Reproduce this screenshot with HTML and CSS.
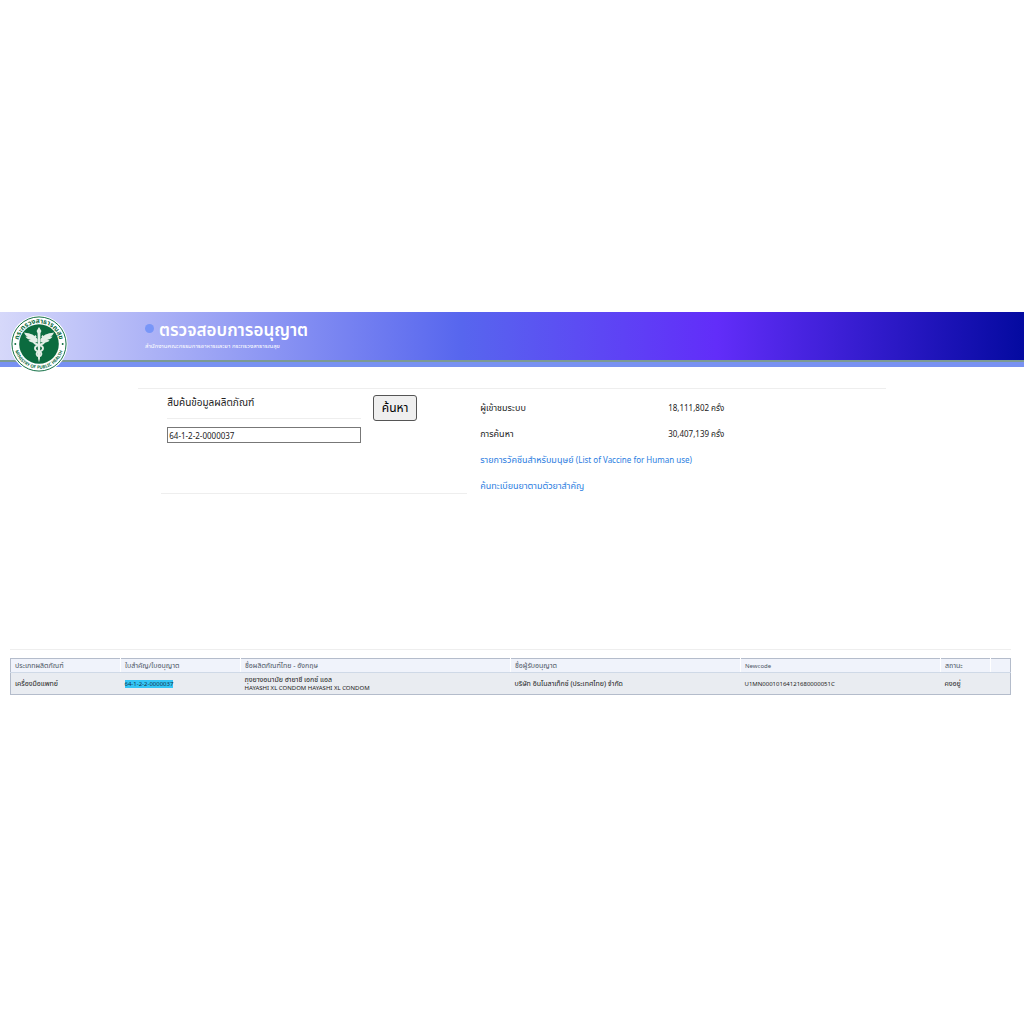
FILE: index.html
```html
<!DOCTYPE html>
<html lang="th">
<head>
    <meta charset="UTF-8">
    <meta name="viewport" content="width=device-width, initial-scale=1.0">
    <title>ตรวจสอบการอนุญาต</title>
    <link rel="stylesheet" href="styles.css">
</head>
<body>
    <div class="page">
        <header class="banner">
            <svg class="seal" viewBox="0 0 120 120" role="img" aria-label="Ministry of Public Health">
                <defs>
                    <path id="arcTop" d="M 17 60 A 43 43 0 0 1 103 60"/>
                    <path id="arcBottom" d="M 9 60 A 51 51 0 0 0 111 60"/>
                </defs>
                <circle cx="60" cy="60" r="59" fill="#fff"/>
                <circle cx="60" cy="60" r="56" fill="none" stroke="#0b6b3f" stroke-width="2"/>
                <circle cx="60" cy="60" r="41" fill="#0b6b3f"/>
                <text class="seal-thai"><textPath href="#arcTop" startOffset="50%">กระทรวงสาธารณสุข</textPath></text>
                <text class="seal-latin"><textPath href="#arcBottom" startOffset="50%">MINISTRY OF PUBLIC HEALTH</textPath></text>
                <circle cx="11" cy="60" r="2" fill="#0b6b3f"/>
                <circle cx="109" cy="60" r="2" fill="#0b6b3f"/>
                <g fill="#e3eee6">
                    <path d="M57 50 C51 41 44 38 29 36 C31 41 33 43 37 44 L32 45 C35 49 39 51 43 51 L38 53 C43 58 50 58 57 56 Z"/>
                    <path d="M63 50 C69 41 76 38 91 36 C89 41 87 43 83 44 L88 45 C85 49 81 51 77 51 L82 53 C77 58 70 58 63 56 Z"/>
                    <path d="M60 25 L65 33 L63 38 L62 90 L60 98 L58 90 L57 38 L55 33 Z"/>
                </g>
                <path d="M54 43 C43 51 48 60 60 62 C72 65 70 74 60 76 C53 78 54 84 60 86 M66 43 C77 51 72 60 60 62 C48 65 50 74 60 76 C67 78 66 84 60 86" fill="none" stroke="#e3eee6" stroke-width="4"/>
            </svg>
            <div class="banner-text">
                <h1>ตรวจสอบการอนุญาต</h1>
                <p>สำนักงานคณะกรรมการอาหารและยา กระทรวงสาธารณสุข</p>
            </div>
        </header>

        <main>
            <section class="panel">
                <form class="search" onsubmit="return false">
                    <div class="field">
                        <label for="keyword">สืบค้นข้อมูลผลิตภัณฑ์</label>
                        <input type="text" id="keyword" value="64-1-2-2-0000037">
                    </div>
                    <button type="submit">ค้นหา</button>
                </form>

                <div class="info">
                    <dl>
                        <dt>ผู้เข้าชมระบบ</dt>
                        <dd>18,111,802 ครั้ง</dd>
                        <dt>การค้นหา</dt>
                        <dd>30,407,139 ครั้ง</dd>
                    </dl>
                    <a href="#">รายการวัคซีนสำหรับมนุษย์ <span class="en">(List of Vaccine for Human use)</span></a>
                    <a href="#">ค้นทะเบียนยาตามตัวยาสำคัญ</a>
                </div>
            </section>

            <section class="results">
                <table>
                    <colgroup>
                        <col class="col-type">
                        <col class="col-license">
                        <col class="col-product">
                        <col class="col-holder">
                        <col class="col-code">
                        <col class="col-status">
                        <col>
                    </colgroup>
                    <thead>
                        <tr>
                            <th>ประเภทผลิตภัณฑ์</th>
                            <th>ใบสำคัญ/ใบอนุญาต</th>
                            <th>ชื่อผลิตภัณฑ์ไทย - อังกฤษ</th>
                            <th>ชื่อผู้รับอนุญาต</th>
                            <th class="code">Newcode</th>
                            <th>สถานะ</th>
                            <th></th>
                        </tr>
                    </thead>
                    <tbody>
                        <tr>
                            <td>เครื่องมือแพทย์</td>
                            <td class="code"><mark>64-1-2-2-0000037</mark></td>
                            <td>ถุงยางอนามัย ฮายาชี เอกซ์ แอล<br><span class="code">HAYASHI XL CONDOM HAYASHI XL CONDOM</span></td>
                            <td>บริษัท อินโนลาเท็กซ์ (ประเทศไทย) จำกัด</td>
                            <td class="code">U1MN00010164121680000051C</td>
                            <td>คงอยู่</td>
                            <td></td>
                        </tr>
                    </tbody>
                </table>
            </section>
        </main>
    </div>
</body>
</html>
```

FILE: styles.css
```css
* {
    box-sizing: border-box;
}

body {
    margin: 0;
    min-height: 100vh;
    display: flex;
    flex-direction: column;
    justify-content: center;
    background-color: #fff;
    color: #222;
    font-family: "Noto Sans", "Noto Sans Thai", sans-serif;
    font-size: 8px;
}

.page {
    padding-bottom: 17px;
}

.banner {
    position: relative;
    height: 55px;
    padding: 8px 0 0 145px;
    background: linear-gradient(to right, #d6d8fa 0%, #5766ee 45%, #622df9 70%, #040aa0 100%);
    border-bottom: 5px solid #7891f2;
    box-shadow: inset 0 -2px 0 #7c9a94;
    color: #fff;
}

.seal {
    position: absolute;
    left: 10px;
    top: 3px;
    width: 58px;
    height: 58px;
}

.seal-thai,
.seal-latin {
    fill: #0b6b3f;
    font-weight: bold;
    text-anchor: middle;
}

.seal-thai {
    font-size: 14px;
}

.seal-latin {
    font-size: 9px;
}

.banner h1 {
    display: flex;
    align-items: center;
    gap: 5px;
    margin: 0;
    font-size: 17px;
    font-weight: 600;
    line-height: 20px;
}

.banner h1::before {
    content: "";
    width: 9px;
    height: 9px;
    margin-bottom: 4px;
    border-radius: 50%;
    background-color: #7896f8;
}

.banner p {
    margin: 0;
    font-size: 6px;
    line-height: 12px;
}

.panel {
    display: grid;
    grid-template-columns: 44% 1fr;
    column-gap: 13px;
    align-items: start;
    width: 73%;
    margin: 21px auto 0;
    border-top: 1px solid #eee;
}

.search {
    display: flex;
    align-items: flex-start;
    gap: 12px;
    height: 105px;
    margin-left: 23px;
    padding: 6px 50px 0 6px;
    border-bottom: 1px solid #eee;
}

.field {
    flex: 1;
}

.field label {
    display: block;
    margin-bottom: 8px;
    padding-bottom: 8px;
    border-bottom: 1px solid #eee;
    font-size: 10px;
    line-height: 15px;
}

.field input {
    display: block;
    width: 100%;
    height: 16px;
    padding: 0 1px;
    border: 1px solid #777;
    background-color: #fff;
    color: #222;
    font: inherit;
}

.search button {
    width: 44px;
    height: 26px;
    padding: 0;
    border: 1px solid #555;
    border-radius: 3px;
    background-color: #efefef;
    color: #000;
    font: inherit;
    font-size: 12px;
    cursor: pointer;
}

.info {
    padding-top: 6px;
    font-size: 9px;
    line-height: 26px;
}

.info dl {
    display: grid;
    grid-template-columns: 188px 1fr;
    margin: 0;
}

.info dd {
    margin: 0;
    font-size: 8px;
}

.info a {
    display: block;
    height: 26px;
    color: #2a7de1;
    text-decoration: none;
}

.info .en {
    font-size: 8px;
}

.results {
    margin: 150px 13px 0 10px;
    padding-top: 8px;
    border-top: 1px solid #eee;
}

table {
    width: 100%;
    table-layout: fixed;
    border-collapse: collapse;
    border: 1px solid #b4bccb;
    font-size: 7px;
    line-height: 8px;
}

th,
td {
    padding: 0 4px;
    text-align: left;
    white-space: nowrap;
}

th {
    height: 14px;
    border-right: 1px solid #fff;
    border-bottom: 1px solid #cfd9e7;
    background-color: #f0f3fb;
    color: #4c5563;
    font-weight: normal;
}

td {
    height: 22px;
    background-color: #e9ecf1;
}

th:last-child {
    border-right-color: #b4bccb;
}

.code {
    font-size: 6px;
}

mark {
    background-color: #35c5f5;
    color: #14324a;
}

.col-type {
    width: 11%;
}

.col-license {
    width: 12%;
}

.col-product {
    width: 27%;
}

.col-holder {
    width: 23%;
}

.col-code {
    width: 20%;
}

.col-status {
    width: 5%;
}
```
